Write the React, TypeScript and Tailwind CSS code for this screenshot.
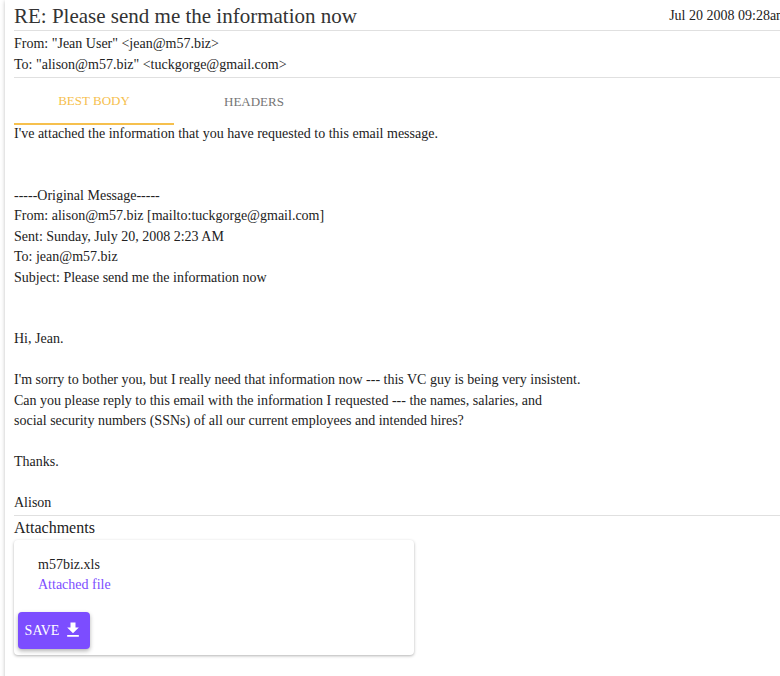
import React from 'react'

const bodyText = `I've attached the information that you have requested to this email message.


-----Original Message-----
From: alison@m57.biz [mailto:tuckgorge@gmail.com]
Sent: Sunday, July 20, 2008 2:23 AM
To: jean@m57.biz
Subject: Please send me the information now


Hi, Jean.

I'm sorry to bother you, but I really need that information now --- this VC guy is being very insistent.
Can you please reply to this email with the information I requested --- the names, salaries, and
social security numbers (SSNs) of all our current employees and intended hires?

Thanks.

Alison`

function DownloadIcon() {
  return (
    <svg width="20" height="20" viewBox="0 0 24 24" fill="currentColor">
      <path d="M19 9h-4V3H9v6H5l7 7 7-7zM5 18v2h14v-2H5z" />
    </svg>
  )
}

export default function App() {
  return (
    <div className="h-[676px] overflow-hidden bg-white font-['Liberation_Serif',serif] text-[#222]">
      <div className="ml-[5px] w-[791px] min-h-[700px] bg-white px-[9px] shadow-[0_1px_4px_rgba(0,0,0,0.25)]">
        {/* header */}
        <div className="flex items-start justify-between border-b border-[#e0e0e0] pt-[2px] h-[31px]">
          <h1 className="text-[21px] leading-[28px] text-[#333] whitespace-nowrap">RE: Please send me the information now</h1>
          <span className="text-[14px] leading-[20px] mt-[4px] whitespace-nowrap">Jul 20 2008 09:28am</span>
        </div>
        <div className="border-b border-[#e0e0e0] pt-[2px] pb-[2px] text-[14px] leading-[21px]">
          <div>From: "Jean User" &lt;jean@m57.biz&gt;</div>
          <div>To: "alison@m57.biz" &lt;tuckgorge@gmail.com&gt;</div>
        </div>

        {/* tabs */}
        <div className="flex h-[47px]">
          <button className="w-[160px] h-full flex items-center justify-center text-[13px] uppercase text-[#f6c04d] border-b-2 border-[#f6c04d]">
            Best Body
          </button>
          <button className="w-[160px] h-full flex items-center justify-center text-[13px] uppercase text-[#757575]">
            Headers
          </button>
        </div>

        {/* body */}
        <div className="whitespace-pre-wrap text-[14px] leading-[20.5px] -mt-[1px]">{bodyText}</div>

        {/* attachments */}
        <div className="border-t border-[#e0e0e0] mt-[1px]">
          <h2 className="text-[16px] leading-[24px]">Attachments</h2>
          <div className="w-[400px] rounded-[4px] bg-white shadow-[0_1px_3px_rgba(0,0,0,0.3)]">
            <div className="px-[24px] pt-[15px] text-[14px] leading-[20.5px]">
              <div>m57biz.xls</div>
              <div className="text-[#7c4dff]">Attached file</div>
            </div>
            <div className="px-[4px] pt-[16px] pb-[6px]">
              <button className="flex items-center gap-[4px] h-[37px] w-[72px] justify-center rounded-[4px] bg-[#7c4dff] text-white text-[14px] font-medium uppercase shadow-[0_2px_4px_rgba(0,0,0,0.3)]">
                Save
                <DownloadIcon />
              </button>
            </div>
          </div>
        </div>
      </div>
    </div>
  )
}
